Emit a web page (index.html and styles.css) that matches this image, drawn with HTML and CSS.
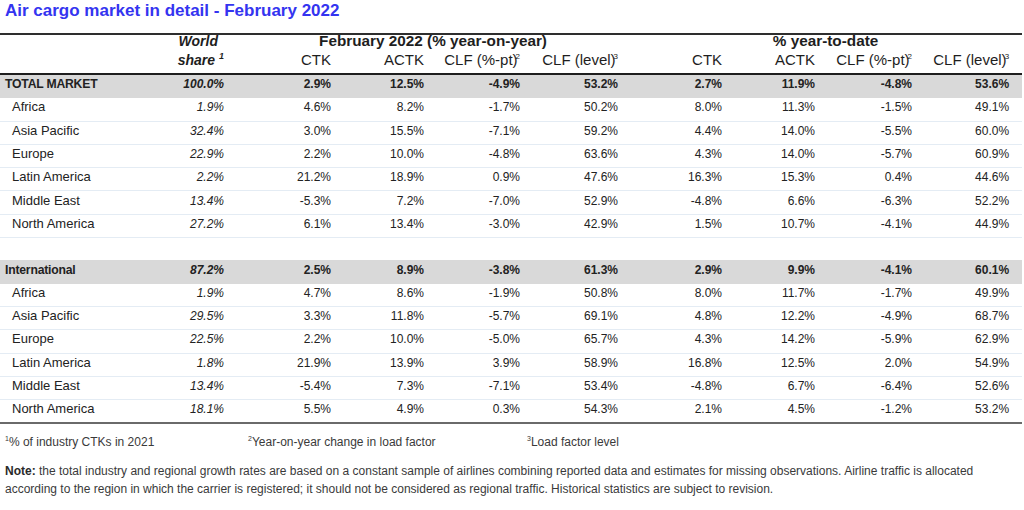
FILE: index.html
```html
<!DOCTYPE html>
<html lang="en">
<head>
<meta charset="utf-8">
<title>Air cargo market in detail - February 2022</title>
<link rel="stylesheet" href="styles.css">
</head>
<body>
<h1 class="title">Air cargo market in detail - February 2022</h1>
<table class="market">
  <colgroup>
    <col class="c-label"><col class="c-share"><col class="c-ctk"><col class="c-actk"><col class="c-clf1"><col class="c-clf2"><col class="c-ctk2"><col class="c-actk"><col class="c-clf3"><col class="c-clf3"><col class="c-end">
  </colgroup>
  <thead>
    <tr class="h1">
      <th></th>
      <th class="world">World</th>
      <th class="group" colspan="4">February 2022 (% year-on-year)</th>
      <th class="group" colspan="4">% year-to-date</th>
      <th></th>
    </tr>
    <tr class="h2">
      <th></th>
      <th class="share">share <sup>1</sup></th>
      <th>CTK</th>
      <th>ACTK</th>
      <th>CLF (%-pt)<sup>2</sup></th>
      <th>CLF (level)<sup>3</sup></th>
      <th>CTK</th>
      <th>ACTK</th>
      <th>CLF (%-pt)<sup>2</sup></th>
      <th>CLF (level)<sup>3</sup></th>
      <th></th>
    </tr>
  </thead>
  <tbody>
    <tr class="total"><td class="lbl">TOTAL MARKET</td><td class="sh">100.0%</td><td>2.9%</td><td>12.5%</td><td>-4.9%</td><td>53.2%</td><td>2.7%</td><td>11.9%</td><td>-4.8%</td><td>53.6%</td><td></td></tr>
    <tr><td class="lbl sub">Africa</td><td class="sh">1.9%</td><td>4.6%</td><td>8.2%</td><td>-1.7%</td><td>50.2%</td><td>8.0%</td><td>11.3%</td><td>-1.5%</td><td>49.1%</td><td></td></tr>
    <tr><td class="lbl sub">Asia Pacific</td><td class="sh">32.4%</td><td>3.0%</td><td>15.5%</td><td>-7.1%</td><td>59.2%</td><td>4.4%</td><td>14.0%</td><td>-5.5%</td><td>60.0%</td><td></td></tr>
    <tr><td class="lbl sub">Europe</td><td class="sh">22.9%</td><td>2.2%</td><td>10.0%</td><td>-4.8%</td><td>63.6%</td><td>4.3%</td><td>14.0%</td><td>-5.7%</td><td>60.9%</td><td></td></tr>
    <tr><td class="lbl sub">Latin America</td><td class="sh">2.2%</td><td>21.2%</td><td>18.9%</td><td>0.9%</td><td>47.6%</td><td>16.3%</td><td>15.3%</td><td>0.4%</td><td>44.6%</td><td></td></tr>
    <tr><td class="lbl sub">Middle East</td><td class="sh">13.4%</td><td>-5.3%</td><td>7.2%</td><td>-7.0%</td><td>52.9%</td><td>-4.8%</td><td>6.6%</td><td>-6.3%</td><td>52.2%</td><td></td></tr>
    <tr><td class="lbl sub">North America</td><td class="sh">27.2%</td><td>6.1%</td><td>13.4%</td><td>-3.0%</td><td>42.9%</td><td>1.5%</td><td>10.7%</td><td>-4.1%</td><td>44.9%</td><td></td></tr>
    <tr class="blank"><td></td><td></td><td></td><td></td><td></td><td></td><td></td><td></td><td></td><td></td><td></td></tr>
    <tr class="total"><td class="lbl">International</td><td class="sh">87.2%</td><td>2.5%</td><td>8.9%</td><td>-3.8%</td><td>61.3%</td><td>2.9%</td><td>9.9%</td><td>-4.1%</td><td>60.1%</td><td></td></tr>
    <tr><td class="lbl sub">Africa</td><td class="sh">1.9%</td><td>4.7%</td><td>8.6%</td><td>-1.9%</td><td>50.8%</td><td>8.0%</td><td>11.7%</td><td>-1.7%</td><td>49.9%</td><td></td></tr>
    <tr><td class="lbl sub">Asia Pacific</td><td class="sh">29.5%</td><td>3.3%</td><td>11.8%</td><td>-5.7%</td><td>69.1%</td><td>4.8%</td><td>12.2%</td><td>-4.9%</td><td>68.7%</td><td></td></tr>
    <tr><td class="lbl sub">Europe</td><td class="sh">22.5%</td><td>2.2%</td><td>10.0%</td><td>-5.0%</td><td>65.7%</td><td>4.3%</td><td>14.2%</td><td>-5.9%</td><td>62.9%</td><td></td></tr>
    <tr><td class="lbl sub">Latin America</td><td class="sh">1.8%</td><td>21.9%</td><td>13.9%</td><td>3.9%</td><td>58.9%</td><td>16.8%</td><td>12.5%</td><td>2.0%</td><td>54.9%</td><td></td></tr>
    <tr><td class="lbl sub">Middle East</td><td class="sh">13.4%</td><td>-5.4%</td><td>7.3%</td><td>-7.1%</td><td>53.4%</td><td>-4.8%</td><td>6.7%</td><td>-6.4%</td><td>52.6%</td><td></td></tr>
    <tr class="last"><td class="lbl sub">North America</td><td class="sh">18.1%</td><td>5.5%</td><td>4.9%</td><td>0.3%</td><td>54.3%</td><td>2.1%</td><td>4.5%</td><td>-1.2%</td><td>53.2%</td><td></td></tr>
  </tbody>
</table>
<div class="footnotes">
  <span class="fn fn1"><sup>1</sup>% of industry CTKs in 2021</span>
  <span class="fn fn2"><sup>2</sup>Year-on-year change in load factor</span>
  <span class="fn fn3"><sup>3</sup>Load factor level</span>
</div>
<p class="note"><b>Note:</b> the total industry and regional growth rates are based on a constant sample of airlines combining reported data and estimates for missing observations. Airline traffic is allocated according to the region in which the carrier is registered; it should not be considered as regional traffic. Historical statistics are subject to revision.</p>
</body>
</html>
```
FILE: styles.css
```css
html, body {
  margin: 0;
  padding: 0;
  background: #ffffff;
}
body {
  font-family: "Liberation Sans", Arial, sans-serif;
  color: #222222;
  width: 1024px;
}
.title {
  margin: 0;
  padding: 1px 0 0 5px;
  height: 20px;
  font-size: 17px;
  line-height: 20px;
  font-weight: bold;
  color: #3434f0;
  margin-bottom: 12px;
}
.market {
  width: 1022px;
  table-layout: fixed;
  border-collapse: collapse;
  border-top: 2px solid #2e2e2e;
}
.c-label { width: 150px; }
.c-share { width: 76px; }
.c-ctk { width: 107px; }
.c-actk { width: 93px; }
.c-clf1 { width: 96px; }
.c-clf2 { width: 98px; }
.c-ctk2 { width: 104px; }
.c-clf3 { width: 97px; }
.c-end { width: 11px; }

.market th {
  padding: 0 2px 0 0;
  text-align: right;
  font-weight: normal;
  white-space: nowrap;
  color: #1e1e1e;
}
.h1 th {
  height: 12px;
  line-height: 12px;
  font-size: 15px;
  font-weight: bold;
}
.h1 th.world {
  font-style: italic;
  font-size: 14px;
  padding-right: 8px;
}
.h1 th.group {
  text-align: center;
  padding: 0 0 0 20px;
  font-size: 15.3px;
}
.h2 th {
  height: 26px;
  line-height: 26px;
  font-size: 15px;
  border-bottom: 2px solid #1e1e1e;
}
.h2 th.share {
  font-weight: bold;
  font-style: italic;
  font-size: 14px;
}
.market th sup {
  font-size: 8px;
  line-height: 0;
  vertical-align: 6px;
  margin-left: -2px;
}
.h2 th.share sup {
  margin-left: 0;
  font-size: 9px;
}
.market td {
  height: 18.3px;
  padding: 0 2px 4px 0;
  line-height: 18px;
  font-size: 12px;
  text-align: right;
  white-space: nowrap;
  border-bottom: 1px solid #e4ecf4;
  color: #222222;
}
.market td.lbl {
  text-align: left;
  padding-left: 5px;
  font-size: 13px;
}
.market td.sub {
  padding-left: 12px;
}
.market td.sh {
  font-style: italic;
}
.market tr.total td {
  background: #d9d9d9;
  font-weight: bold;
  border-bottom-color: #d9d9d9;
}
.market tr.total td.lbl {
  font-size: 12.2px;
  letter-spacing: -0.2px;
}
.market tr.blank td {
  border-bottom: none;
}
.market tr.last td {
  border-bottom: 2px solid #6a6a6a;
}
.footnotes {
  display: flex;
  margin-top: 10px;
  height: 16px;
  font-size: 12px;
  line-height: 16px;
  color: #3a3a3a;
}
.fn {
  white-space: nowrap;
}
.fn1 { padding-left: 5px; width: 243px; }
.fn2 { width: 279px; }
.fn sup {
  font-size: 7px;
  line-height: 0;
  vertical-align: 5px;
}
.note {
  margin: 13px 0 0 0;
  padding-left: 5px;
  width: 985px;
  font-size: 12px;
  line-height: 17.5px;
  color: #3a3a3a;
}
.note b {
  color: #2a2a2a;
}
```
